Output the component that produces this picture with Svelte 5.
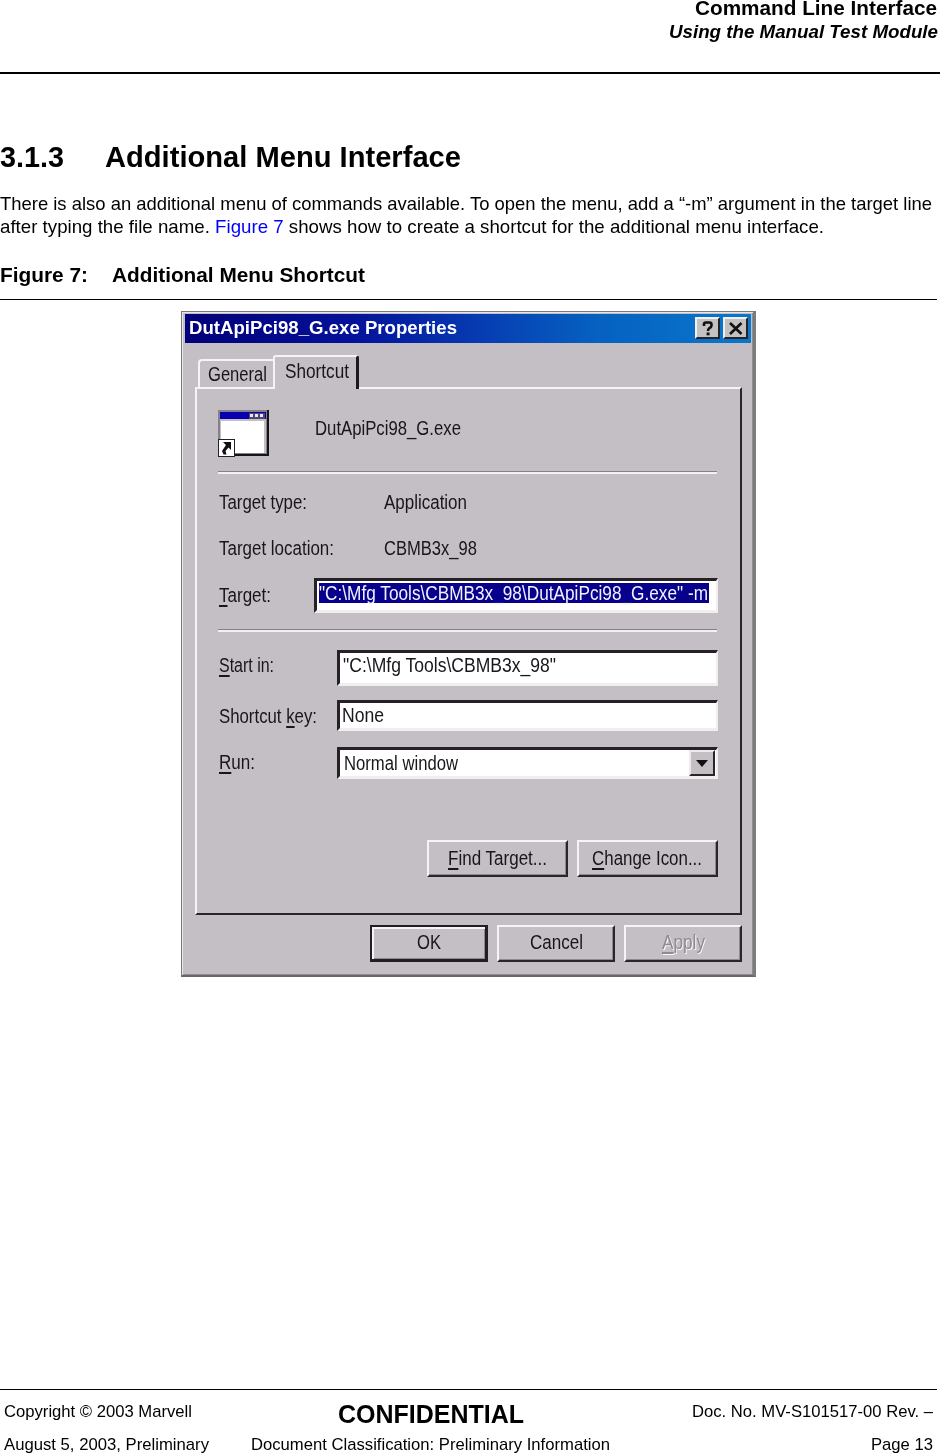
<script lang="ts">
    const properties = [
        { label: 'Target type:', labelWidth: 88, value: 'Application', valueWidth: 83 },
        { label: 'Target location:', labelWidth: 115, value: 'CBMB3x_98', valueWidth: 93 },
    ];

    // Squeeze or stretch a line of text to a fixed width
    const fit = (node: HTMLElement, width: number) => {
        const natural = node.getBoundingClientRect().width;
        node.style.width = `${width}px`;
        node.style.transform = `scaleX(${width / natural})`;
    };
</script>

<div class="page">
    <header>
        <div class="chapter"><span class="fit" use:fit={242}>Command Line Interface</span></div>
        <div class="section"><span class="fit" use:fit={269}>Using the Manual Test Module</span></div>
    </header>

    <main>
        <h1>
            <span class="fit" use:fit={64}>3.1.3</span>
            <span class="fit" use:fit={356}>Additional Menu Interface</span>
        </h1>
        <p>
            <span class="fit" use:fit={932}>There is also an additional menu of commands available. To open the menu, add a “-m” argument in the target line</span>
            <span class="fit" use:fit={824}>after typing the file name. <a href="#figure-7">Figure 7</a> shows how to create a shortcut for the additional menu interface.</span>
        </p>
        <h2>
            <span class="fit" use:fit={88}>Figure 7:</span>
            <span class="fit" use:fit={253}>Additional Menu Shortcut</span>
        </h2>

        <div class="dialog" id="figure-7">
            <div class="titlebar">
                <span class="fit title" use:fit={268}>DutApiPci98_G.exe Properties</span>
                <div class="title-btn">
                    <svg width="12" height="15" viewBox="0 0 12 15">
                        <path d="M2 5V3.500Q2 1.500 4 1.500H7.500Q9.500 1.500 9.500 3.500V4.500Q9.500 6 7.500 7Q6 8 6 10" fill="none" stroke="#111" stroke-width="2.600" />
                        <rect x="4.600" y="11.500" width="3" height="2.800" fill="#111" />
                    </svg>
                </div>
                <div class="title-btn">
                    <svg width="14" height="13" viewBox="0 0 14 13">
                        <path d="M1 1L12.500 12M12.500 1L1 12" fill="none" stroke="#111" stroke-width="2.600" />
                    </svg>
                </div>
            </div>

            <div class="tabs">
                <div class="tab"><span class="fit" use:fit={59}>General</span></div>
                <div class="tab active"><span class="fit" use:fit={64}>Shortcut</span></div>
            </div>

            <div class="panel">
                <div class="file">
                    <svg width="51" height="48" viewBox="0 0 51 48">
                        <rect x="0" y="0" width="51" height="46" fill="#161418" />
                        <rect x="0" y="0" width="49" height="44" fill="#85818a" />
                        <rect x="2" y="2" width="46" height="41" fill="#c4bfc4" />
                        <rect x="2" y="2" width="46" height="7" fill="#0800b0" />
                        <path d="M31 3h16v6h-16z" fill="#4b4870" />
                        <path d="M32 4h3v3h-3zM37 4h3v3h-3zM42 4h3v3h-3z" fill="#e8e6ee" />
                        <rect x="3" y="11" width="43" height="32" fill="#fff" />
                        <rect x="0" y="29" width="17" height="18" fill="#222" />
                        <rect x="1" y="30" width="15" height="16" fill="#fff" />
                        <path d="M5 32h8v8l-2.500-2.500L7.500 41L8.500 44.500H5.500L4 41L8 35z" fill="#111" />
                    </svg>
                    <span class="fit" use:fit={146}>DutApiPci98_G.exe</span>
                </div>
                <div class="separator"></div>

                {#each properties as row}
                    <div class="property">
                        <span class="fit" use:fit={row.labelWidth}>{row.label}</span>
                        <span class="fit" use:fit={row.valueWidth}>{row.value}</span>
                    </div>
                {/each}

                <div class="row target">
                    <label for="target"><span class="fit" use:fit={52}><u>T</u>arget:</span></label>
                    <div class="field" id="target">
                        <div class="selection"><span class="fit" use:fit={389}>"C:\Mfg Tools\CBMB3x_98\DutApiPci98_G.exe" -m</span></div>
                    </div>
                </div>
                <div class="separator second"></div>

                <div class="row start">
                    <label for="start"><span class="fit" use:fit={55}><u>S</u>tart in:</span></label>
                    <div class="field" id="start"><span class="fit" use:fit={213}>"C:\Mfg Tools\CBMB3x_98"</span></div>
                </div>
                <div class="row key">
                    <label for="key"><span class="fit" use:fit={98}>Shortcut <u>k</u>ey:</span></label>
                    <div class="field" id="key"><span class="fit" use:fit={42}>None</span></div>
                </div>
                <div class="row run">
                    <label for="run"><span class="fit" use:fit={36}><u>R</u>un:</span></label>
                    <div class="field" id="run">
                        <span class="fit" use:fit={114}>Normal window</span>
                        <div class="arrow">
                            <svg width="12" height="7" viewBox="0 0 12 7"><path d="M0 0H12L6 7z" fill="#111" /></svg>
                        </div>
                    </div>
                </div>

                <div class="panel-buttons">
                    <button><span class="fit" use:fit={99}><u>F</u>ind Target...</span></button>
                    <button><span class="fit" use:fit={110}><u>C</u>hange Icon...</span></button>
                </div>
            </div>

            <div class="dialog-buttons">
                <button class="default"><span class="fit" use:fit={24}>OK</span></button>
                <button><span class="fit" use:fit={53}>Cancel</span></button>
                <button class="disabled"><span class="fit" use:fit={43}><u>A</u>pply</span></button>
            </div>
        </div>
    </main>

    <footer>
        <div class="left"><span class="fit" use:fit={188}>Copyright © 2003 Marvell</span></div>
        <div class="middle confidential"><span class="fit" use:fit={186}>CONFIDENTIAL</span></div>
        <div class="right"><span class="fit" use:fit={241}>Doc. No. MV-S101517-00 Rev. –</span></div>
        <div class="left"><span class="fit" use:fit={205}>August 5, 2003, Preliminary</span></div>
        <div class="middle"><span class="fit" use:fit={359}>Document Classification: Preliminary Information</span></div>
        <div class="right"><span class="fit" use:fit={62}>Page 13</span></div>
    </footer>
</div>

<style>
    :global(body) {
        margin: 0;
        background: #fff;
    }

    .page {
        display: flex;
        flex-direction: column;
        width: 940px;
        height: 1454px;
        overflow: hidden;
        font-family: "Liberation Sans", Arial, sans-serif;
        color: #000;
    }

    .page * {
        box-sizing: border-box;
    }

    .fit {
        display: inline-block;
        flex: none;
        justify-self: start;
        text-align: left;
        white-space: nowrap;
        transform-origin: left center;
    }

    header {
        height: 74px;
        border-bottom: 2px solid #000;
        font-weight: bold;
        text-align: right;
    }

    .chapter {
        height: 20px;
        padding-right: 3px;
        font-size: 20.5px;
        line-height: 16px;
    }

    .section {
        padding-right: 2px;
        font-size: 18.6px;
        font-style: italic;
        line-height: 24px;
    }

    main {
        flex: 1;
    }

    h1 {
        display: flex;
        gap: 41px;
        margin: 67px 0 0;
        font-size: 29px;
        line-height: 32px;
    }

    p {
        display: flex;
        flex-direction: column;
        align-items: flex-start;
        margin: 19px 0 0;
        font-size: 18.6px;
        line-height: 23px;
    }

    a {
        color: #00f;
        text-decoration: none;
    }

    h2 {
        display: flex;
        gap: 24px;
        width: 937px;
        height: 38px;
        margin: 24px 0 11px;
        border-bottom: 1px solid #000;
        font-size: 20.6px;
        line-height: 25px;
    }

    .dialog {
        width: 575px;
        height: 666px;
        margin-left: 181px;
        padding: 2px 2px 0 3px;
        border: 1px solid #77797a;
        border-right: 3px solid #7d7b7e;
        border-bottom: 2px solid #6a676c;
        background: #c4bfc4;
        box-shadow: inset 1px 1px #e8e5e6, inset -1px -1px #8f8b90;
        color: #18151b;
        font-size: 19.4px;
        line-height: 20px;
    }

    .titlebar {
        display: flex;
        align-items: center;
        height: 29px;
        padding: 0 3px 0 4px;
        background: linear-gradient(90deg, #020078 0%, #04129a 30%, #0638b0 50%, #0660c0 72%, #0878cc 100%);
        color: #fff;
    }

    .title {
        margin-right: auto;
        padding-bottom: 1px;
        font-size: 18px;
        font-weight: bold;
    }

    .title-btn {
        display: flex;
        align-items: center;
        justify-content: center;
        width: 25px;
        height: 22px;
        margin: 0 0 1px 3px;
        border: 2px solid;
        border-color: #f2f0ef #262329 #262329 #f2f0ef;
        background: #c4c1c2;
    }

    .tabs {
        display: flex;
        align-items: flex-end;
        height: 44px;
        padding-left: 13px;
    }

    .tab {
        width: 75px;
        height: 28px;
        padding: 3px 0 0 8px;
        border: 2px solid #f6f3f4;
        border-right: 0;
        border-bottom: 0;
        border-radius: 4px 0 0 0;
    }

    .tab.active {
        position: relative;
        width: 86px;
        height: 34px;
        margin-bottom: -2px;
        padding: 4px 0 0 10px;
        border-right: 3px solid #1c191e;
        border-radius: 3px 3px 0 0;
        background: #c4bfc4;
    }

    .panel {
        width: 547px;
        height: 528px;
        margin-left: 10px;
        padding: 21px 21px 0 21px;
        border: 2px solid;
        border-color: #f6f3f4 #29262b #29262b #f6f3f4;
    }

    .file {
        display: flex;
        gap: 46px;
        height: 46px;
    }

    .file svg {
        flex: none;
    }

    .file .fit {
        margin-top: 8px;
    }

    .separator {
        height: 3px;
        width: 499px;
        margin: 15px 0 18px;
        border-top: 1px solid #858187;
        border-bottom: 2px solid #f3f0f1;
    }

    .separator.second {
        margin: 16px 0 18px;
    }

    .property {
        display: grid;
        grid-template-columns: 165px 1fr;
        height: 20px;
        margin-bottom: 26px;
        padding-left: 1px;
    }

    .property + .row {
        margin-top: -6px;
    }

    .row {
        display: grid;
        grid-template-columns: 119px 381px;
    }

    .row label {
        padding-left: 1px;
    }

    .row.target {
        grid-template-columns: 96px 404px;
        height: 35px;
    }

    .row.target label {
        padding-top: 7px;
    }

    u {
        text-decoration-thickness: 1.5px;
        text-underline-offset: 3px;
        text-decoration-skip-ink: none;
    }

    .field {
        border: 2px solid;
        border-width: 3px 2px 3px 3px;
        border-color: #252127 #f1eeef #f1eeef #252127;
        background: #fff;
    }

    .target .field {
        padding: 2px 0 0 2px;
    }

    .selection {
        width: 390px;
        height: 20px;
        background: #06008c;
        color: #f3f2fa;
        line-height: 20px;
    }

    .start {
        height: 36px;
    }

    .start label {
        padding-top: 5px;
    }

    .start .field {
        padding: 2px 0 0 3px;
    }

    .key {
        height: 31px;
        margin-top: 14px;
    }

    .key label {
        padding-top: 6px;
    }

    .key .field {
        padding: 2px 0 0 2px;
    }

    .run {
        height: 32px;
        margin-top: 16px;
    }

    .run label {
        padding-top: 5px;
    }

    .run .field {
        display: flex;
        justify-content: space-between;
        padding: 0 1px 0 4px;
    }

    .run .field .fit {
        margin-top: 3px;
    }

    .arrow {
        display: flex;
        align-items: center;
        justify-content: center;
        width: 26px;
        height: 26px;
        border: 2px solid;
        border-color: #edeaeb #29262b #29262b #edeaeb;
        background: #c4bfc4;
    }

    button {
        display: flex;
        align-items: center;
        justify-content: center;
        width: 141px;
        height: 37px;
        padding: 0 1px 2px 0;
        border: 2px solid;
        border-color: #f6f3f4 #29262b #29262b #f6f3f4;
        background: #c4bfc4;
        box-shadow: inset -1px -1px #8d898f;
        color: inherit;
        font: inherit;
    }

    .panel-buttons {
        display: flex;
        gap: 9px;
        margin: 61px 0 0 209px;
    }

    .dialog-buttons {
        display: flex;
        gap: 9px;
        margin: 10px 0 0 185px;
    }

    .dialog-buttons button {
        width: 118px;
        padding: 0 0 3px;
    }

    .dialog-buttons .default {
        border-width: 2px 3px 3px 2px;
        border-color: #221f24;
        box-shadow: inset 2px 2px #f6f3f4, inset -1px -1px #8d898f;
        padding: 0 0 2px 1px;
    }

    .dialog-buttons .disabled {
        color: #8f8a90;
        text-shadow: 1px 1px #fbf8f9;
    }

    footer {
        display: grid;
        grid-template-columns: 247px 367px 1fr;
        grid-template-rows: 41px 24px;
        width: 937px;
        height: 65px;
        border-top: 1px solid #000;
        font-size: 16.6px;
        line-height: 20px;
    }

    footer > div {
        padding-top: 12px;
    }

    footer > div:nth-child(n + 4) {
        padding-top: 4px;
    }

    .left {
        padding-left: 3.5px;
    }

    .middle {
        text-align: center;
    }

    footer > .confidential {
        padding-top: 14px;
        font-size: 25.4px;
    }

    .confidential {
        font-weight: bold;
    }

    .right {
        padding-right: 4px;
        text-align: right;
    }
</style>
